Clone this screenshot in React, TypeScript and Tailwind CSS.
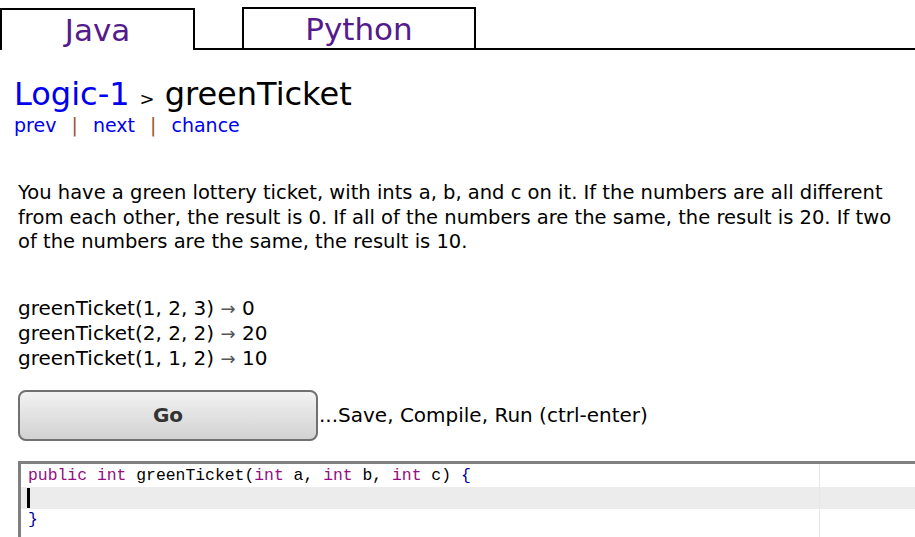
const examples = [
  { call: "greenTicket(1, 2, 3)", result: "0" },
  { call: "greenTicket(2, 2, 2)", result: "20" },
  { call: "greenTicket(1, 1, 2)", result: "10" },
];

const Kw = ({ children }: { children: string }) => <span className="text-[#930f80]">{children}</span>;

const App = () => {
  return (
    <div className="min-h-[537px] bg-white text-black font-['DejaVu_Sans',Verdana,sans-serif] overflow-hidden">
      {/* Tabs */}
      <div className="flex items-end h-[50px] pt-[7px]">
        <div className="w-[195px] h-[42px] border-2 border-b-0 border-black flex items-center justify-center text-[31px] text-[#551a8b]">
          Java
        </div>
        <div className="w-[47px] h-[2px] bg-black" />
        <div className="w-[234px] h-[43px] border-2 border-black flex items-center justify-center text-[31px] text-[#551a8b] pt-[2px]">
          Python
        </div>
        <div className="flex-1 h-[2px] bg-black" />
      </div>

      {/* Title */}
      <div className="pl-[14px] pt-[26px]">
        <div className="flex items-baseline leading-[36px]">
          <span className="text-[32px] text-[#0000ee]">Logic-1</span>
          <span className="text-[18px] mx-[10px]">&gt;</span>
          <span className="text-[32px]">greenTicket</span>
        </div>
        <div className="text-[19px] leading-[16px] text-[#0000ee]">
          prev <span className="text-[#a0522d] mx-[9px]">|</span> next{" "}
          <span className="text-[#a0522d] mx-[9px]">|</span> chance
        </div>
      </div>

      {/* Description */}
      <div className="pl-[18px] pr-[4px] pt-[48px] text-[19.5px] leading-[24.5px]">
        You have a green lottery ticket, with ints a, b, and c on it. If the numbers are all different from each other,
        the result is 0. If all of the numbers are the same, the result is 20. If two of the numbers are the same, the
        result is 10.
      </div>

      {/* Examples */}
      <div className="pl-[18px] pt-[41px] text-[20px] leading-[25px]">
        {examples.map((ex) => (
          <div key={ex.call}>
            {ex.call} <span className="text-[#555] text-[18px]">→</span> {ex.result}
          </div>
        ))}
      </div>

      {/* Go button */}
      <div className="flex items-center pl-[18px] pt-[19px]">
        <button className="w-[300px] h-[51px] rounded-[8px] border-2 border-[#707070] bg-gradient-to-b from-[#f2f2f2] to-[#d2d2d2] text-[20px] font-bold text-[#333]">
          Go
        </button>
        <span className="text-[20px] ml-[1px]">...Save, Compile, Run (ctrl-enter)</span>
      </div>

      {/* Editor */}
      <div className="ml-[18px] mt-[20px] border-l-[3px] border-t-[3px] border-[#808080] relative h-[80px] font-['Liberation_Mono',monospace] text-[16.4px] leading-[22px]">
        <div className="absolute top-0 bottom-0 left-[798px] w-px bg-[#e8e8e8]" />
        <div className="pt-[1px]">
          <div className="pl-[7px] h-[22px]">
            <Kw>public</Kw> <Kw>int</Kw> greenTicket(<Kw>int</Kw> a, <Kw>int</Kw> b, <Kw>int</Kw> c){" "}
            <span className="text-[#0000a2]">{"{"}</span>
          </div>
          <div className="h-[22px] bg-[#ececec] pl-[6px] flex items-center">
            <div className="w-[3px] h-[20px] bg-black" />
          </div>
          <div className="pl-[7px] h-[22px] text-[#0000a2]">{"}"}</div>
        </div>
      </div>
    </div>
  );
};

export default App;
